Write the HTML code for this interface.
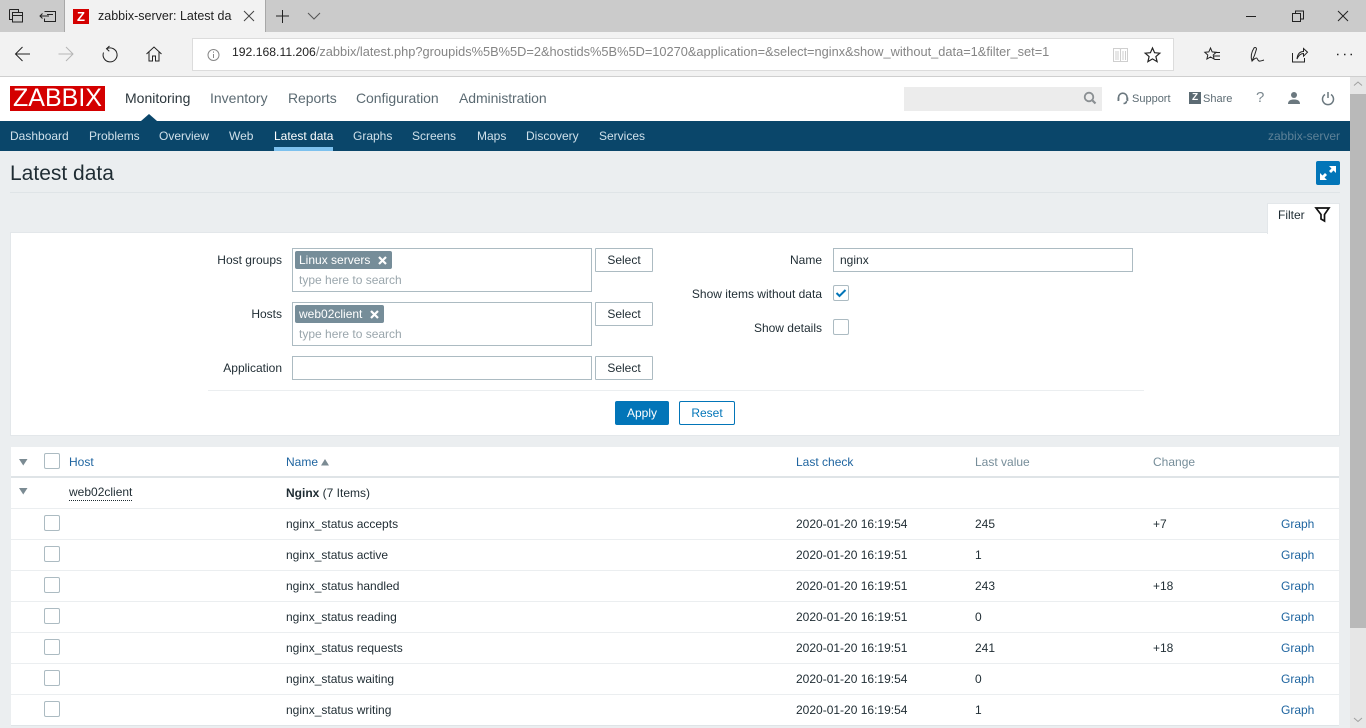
<!DOCTYPE html>
<html><head><meta charset="utf-8"><title>zabbix-server: Latest data</title>
<style>
html,body{margin:0;padding:0;width:1366px;height:728px;overflow:hidden;background:#ebeef0;font-family:"Liberation Sans",sans-serif;font-size:12px;color:#1f2c33}
.a,.t{position:absolute}
.t{white-space:nowrap;line-height:16px}
.r{text-align:right}
.b{background:#fff;border:1px solid #acbbc2;box-sizing:border-box;position:absolute}
.sel{position:absolute;left:595px;width:58px;height:24px;box-sizing:border-box;background:#fff;border:1px solid #acbbc2;text-align:center;line-height:22px;border-radius:1px}
.tag{position:absolute;left:295px;height:18px;background:#768d99;color:#fff;line-height:18px;padding-left:4px;border-radius:2px;box-sizing:border-box}
.ph{position:absolute;left:299px;color:#9aa6ac;line-height:16px}
.cb{position:absolute;width:16px;height:16px;box-sizing:border-box;background:#fff;border:1px solid #acbbc2;border-radius:2px}
.l{color:#1f65a0}
.mn{position:absolute;top:90px;font-size:14px;line-height:16px;color:#5c6b73}
.sn{position:absolute;top:128px;line-height:16px;color:#cfe0ea}
.hl{position:absolute;left:11px;width:1328px;height:1px;background:#ebeef0}
svg{position:absolute;overflow:visible}
</style></head><body>

<!-- browser chrome -->
<div class="a" style="left:0;top:0;width:1366px;height:32px;background:#cbcbcb"></div>
<div class="a" style="left:0;top:32px;width:1366px;height:44px;background:#f2f2f2"></div>
<div class="a" style="left:0;top:76px;width:1366px;height:1px;background:#cfcfcf"></div>
<div class="a" style="left:64px;top:0;width:202px;height:32px;background:#f2f2f2;border-left:1px solid #a8a8a8;border-right:1px solid #a8a8a8;box-sizing:border-box"></div>
<svg style="left:0;top:0" width="340" height="32" fill="none" stroke="#222" stroke-width="1">
<path d="M9.500 9.500h9v3M9.500 9.500v10h3M12.500 12.500h10v9.500h-10zM12.500 15.500h10"/>
<path d="M44.500 11.500h11v10h-11v-3M49 16h-9M42.500 13.500l-2.500 2.500 2.500 2.500M47 14.500h6"/>
<path d="M244 11l10 10M254 11l-10 10" stroke="#444"/>
<path d="M276 16h13M282.500 10v13" stroke="#222"/>
<path d="M308 13l6 6 6-6" stroke="#555"/>
</svg>
<div class="a" style="left:73px;top:9px;width:16px;height:15px;background:#d40000;color:#fff;font:bold 13px/15px 'Liberation Sans',sans-serif;text-align:center">Z</div>
<div class="t" style="left:98px;top:8px;font-size:12.500px;color:#222;width:138px;overflow:hidden">zabbix-server: Latest da</div>

<svg style="left:0;top:32px" width="180" height="44" fill="none" stroke="#222" stroke-width="1">
<path d="M30 22H15.500M22.500 15l-7 7 7 7"/>
<path d="M73 22H58.500M66 15l7 7-7 7" stroke="#b5b5b5"/>
<path d="M107 16.600A7 7 0 1 1 103.500 20.500M109.500 14l-3 2.800 2.800 2.500"/>
<path d="M146.500 22l7.500-7 7.500 7M149 20v9h3.500v-5h3v5h3.500v-9"/>
</svg>
<div class="a" style="left:192px;top:38px;width:982px;height:33px;background:#fff;border:1px solid #dcdcdc;box-sizing:border-box"></div>
<svg style="left:207px;top:48px" width="14" height="14" fill="none" stroke="#888"><circle cx="6.500" cy="7" r="5.500"/><path d="M6.500 6v4M6.500 3.500v1.200"/></svg>
<div class="t" style="left:232px;top:44px;font-size:12.800px;color:#858585"><span style="color:#222;font-size:12.200px">192.168.11.206</span>/zabbix/latest.php?groupids%5B%5D=2&amp;hostids%5B%5D=10270&amp;application=&amp;select=nginx&amp;show_without_data=1&amp;filter_set=1</div>
<svg style="left:1100px;top:40px" width="266" height="30" fill="none" stroke="#222" stroke-width="1">
<path d="M13.500 8.500h6.500l.5 1 .5-1h6.500v13h-14zM20.500 9.500v12M16 11v9M18 11v9M23 11v9M25.500 11v9" stroke="#cfcfcf"/>
<path d="M52.500 8l2.100 4.700 5.200.5-3.900 3.400 1.200 5-4.600-2.700-4.600 2.700 1.200-5-3.900-3.400 5.200-.5z" stroke-width="1.200"/>
<path d="M110.500 8l1.700 3.900 4 .4-3 2.700 .9 4-3.600-2.100-3.600 2.100 .9-4-3-2.700 4-.4zM114 12.500h6M114 16h6M114 19.500h6"/>
<path d="M152 21c-1.500-4 -.5-9 2-13 1-1 2.500-.5 2.500 1-1 4-2.500 8-4.500 12zM152 21c1.500-1.500 3-3 4.500-3 1 0 1 2.500 2.500 3 1.500.5 3-.5 5-1"/>
<path d="M192.500 13v9h12v-4M197 19c.5-5 3-7.500 6.500-7.500V8.500l4 3.700-4 4v-2.700c-3 0-5 2-6.500 5.500z"/>
<path d="M237 14.500h1.500M244 14.500h1.500M250.500 14.500h1.500" stroke-width="1.500"/>
</svg>
<svg style="left:1230px;top:0" width="136" height="32" fill="none" stroke="#222" stroke-width="1">
<path d="M16 16.500h10" />
<path d="M62.500 13.500h8v8h-8zM65.500 13.500v-2.500h8v8h-3"/>
<path d="M108 11l10 10M118 11l-10 10"/>
</svg>

<!-- zabbix header -->
<div class="a" style="left:0;top:77px;width:1350px;height:44px;background:#fff"></div>
<div class="a" style="left:10px;top:86px;width:95px;height:25px;background:#d40000;color:#fff;font-size:25px;line-height:25px;text-align:center;overflow:hidden">ZABBIX</div>
<div class="mn" style="left:125px;color:#2b363c">Monitoring</div>
<div class="mn" style="left:210px">Inventory</div>
<div class="mn" style="left:288px;letter-spacing:-.05px">Reports</div>
<div class="mn" style="left:356px;letter-spacing:-.05px">Configuration</div>
<div class="mn" style="left:459px;letter-spacing:-.08px">Administration</div>
<div class="a" style="left:904px;top:87px;width:198px;height:24px;background:#ececec"></div>
<svg style="left:1083px;top:91px" width="16" height="16" fill="none" stroke="#8a8f92" stroke-width="1.800"><circle cx="6" cy="6" r="4.300"/><path d="M9.500 9.500l3 3" stroke-width="2.200"/></svg>
<svg style="left:1117px;top:92px" width="12" height="13" fill="none" stroke="#6b787f" stroke-width="1.600"><path d="M1.500 8V5.500a4.300 4.300 0 0 1 8.600 0V8M9.500 9c0 1.500-1 2.500-3 2.500"/><rect x=".5" y="5.500" width="1.800" height="3.500" fill="#6b787f" stroke="none"/><rect x="9.500" y="5.500" width="1.800" height="3.500" fill="#6b787f" stroke="none"/></svg>
<div class="t" style="left:1132px;top:91px;font-size:11px;color:#5c6b73">Support</div>
<div class="a" style="left:1189px;top:92px;width:12px;height:12px;background:#5c6b73;color:#fff;font:bold 10px/12px 'Liberation Sans',sans-serif;text-align:center">Z</div>
<div class="t" style="left:1203px;top:91px;font-size:11px;color:#5c6b73">Share</div>
<div class="t" style="left:1256px;top:90px;font-size:15px;color:#7b888f">?</div>
<svg style="left:1287px;top:91px" width="14" height="14" fill="#6b787f"><circle cx="7" cy="4" r="3"/><path d="M1 13c0-3.500 2.500-4.500 6-4.500s6 1 6 4.500z"/></svg>
<svg style="left:1321px;top:91px" width="14" height="14" fill="none" stroke="#6b787f" stroke-width="1.500"><path d="M4 3.500a5.500 5.500 0 1 0 6 0M7 1v6"/></svg>

<!-- sub nav -->
<div class="a" style="left:0;top:121px;width:1350px;height:30px;background:#0a466a"></div>
<div class="a" style="left:141px;top:114px;width:0;height:0;border-left:8px solid transparent;border-right:8px solid transparent;border-bottom:7px solid #0a466a"></div>
<div class="sn" style="left:10px">Dashboard</div>
<div class="sn" style="left:89px">Problems</div>
<div class="sn" style="left:159px">Overview</div>
<div class="sn" style="left:229px">Web</div>
<div class="sn" style="left:274px;color:#fff">Latest data</div>
<div class="a" style="left:274px;top:147px;width:59px;height:4px;background:#7dc1ee"></div>
<div class="sn" style="left:353px">Graphs</div>
<div class="sn" style="left:412px">Screens</div>
<div class="sn" style="left:477px">Maps</div>
<div class="sn" style="left:526px">Discovery</div>
<div class="sn" style="left:599px">Services</div>
<div class="sn" style="left:1268px;color:#5d8197">zabbix-server</div>

<!-- title -->
<div class="t" style="left:10px;top:162px;font-size:21px;line-height:24px;color:#1f2c33">Latest data</div>
<div class="a" style="left:10px;top:192px;width:1330px;height:1px;background:#dfe4e7"></div>
<div class="a" style="left:1316px;top:161px;width:24px;height:24px;background:#0275b8;border-radius:2px"></div>
<svg style="left:1316px;top:161px" width="24" height="24" fill="#fff"><path d="M13 5h7v7l-2.500-2.500-2.500 2.500-2-2 2.500-2.500zM11 19H4v-7l2.500 2.500L9 12l2 2-2.500 2.500z"/></svg>

<!-- filter -->
<div class="a" style="left:10px;top:232px;width:1330px;height:204px;background:#fff;border:1px solid #e3e7ea;box-sizing:border-box"></div>
<div class="a" style="left:1267px;top:203px;width:73px;height:31px;background:#fff;border:1px solid #e3e7ea;border-bottom:0;box-sizing:border-box"></div>
<div class="t" style="left:1278px;top:207px;color:#1f2c33">Filter</div>
<svg style="left:1315px;top:207px" width="15" height="15" fill="none" stroke="#111" stroke-width="1.700"><path d="M1 1h13L9.500 7.500v6.500L6 12V7.500z"/></svg>

<div class="t r" style="left:182px;width:100px;top:252px">Host groups</div>
<div class="b" style="left:292px;top:248px;width:300px;height:44px"></div>
<div class="tag" style="top:251px;width:97px">Linux servers</div>
<svg style="left:378px;top:256px" width="9" height="9" stroke="#fff" stroke-width="2.200"><path d="M1 1l7 7M8 1L1 8"/></svg>
<div class="ph" style="top:272px">type here to search</div>
<div class="sel" style="top:248px">Select</div>

<div class="t r" style="left:182px;width:100px;top:306px">Hosts</div>
<div class="b" style="left:292px;top:302px;width:300px;height:44px"></div>
<div class="tag" style="top:305px;width:89px">web02client</div>
<svg style="left:370px;top:310px" width="9" height="9" stroke="#fff" stroke-width="2.200"><path d="M1 1l7 7M8 1L1 8"/></svg>
<div class="ph" style="top:326px">type here to search</div>
<div class="sel" style="top:302px">Select</div>

<div class="t r" style="left:182px;width:100px;top:360px">Application</div>
<div class="b" style="left:292px;top:356px;width:300px;height:24px"></div>
<div class="sel" style="top:356px">Select</div>

<div class="t r" style="left:622px;width:200px;top:252px">Name</div>
<div class="b" style="left:833px;top:248px;width:300px;height:24px"></div>
<div class="t" style="left:840px;top:252px">nginx</div>
<div class="t r" style="left:622px;width:200px;top:286px">Show items without data</div>
<div class="cb" style="left:833px;top:285px"></div>
<svg style="left:833px;top:285px" width="16" height="16" fill="none" stroke="#0275b8" stroke-width="2"><path d="M3.500 8l3 3 6-6"/></svg>
<div class="t r" style="left:622px;width:200px;top:320px">Show details</div>
<div class="cb" style="left:833px;top:319px"></div>

<div class="a" style="left:208px;top:390px;width:936px;height:1px;background:#ebeef0"></div>
<div class="a" style="left:615px;top:401px;width:54px;height:24px;background:#0275b8;color:#fff;border-radius:2px;text-align:center;line-height:24px">Apply</div>
<div class="a" style="left:679px;top:401px;width:56px;height:24px;box-sizing:border-box;background:#fff;border:1px solid #0275b8;color:#0275b8;border-radius:2px;text-align:center;line-height:22px">Reset</div>

<!-- table -->
<div class="a" style="left:11px;top:447px;width:1328px;height:279px;background:#fff"></div>
<div class="a" style="left:11px;top:476px;width:1328px;height:2px;background:#dfe4e7"></div>
<div class="hl" style="top:508px"></div><div class="hl" style="top:539px"></div><div class="hl" style="top:570px"></div><div class="hl" style="top:601px"></div><div class="hl" style="top:632px"></div><div class="hl" style="top:663px"></div><div class="hl" style="top:694px"></div><div class="hl" style="top:725px;background:#dfe4e7"></div>

<svg style="left:19px;top:459px" width="9" height="40" fill="#7b8b93"><path d="M0 0h8.500L4.250 6.500zM0 29h8.500L4.250 35.500z"/></svg>
<div class="cb" style="left:44px;top:453px"></div>
<div class="t l" style="left:69px;top:454px">Host</div>
<div class="t l" style="left:286px;top:454px">Name</div>
<svg style="left:321px;top:459px" width="8" height="7" fill="#7b8b93"><path d="M0 6.500L4 0l4 6.500z"/></svg>
<div class="t l" style="left:796px;top:454px">Last check</div>
<div class="t" style="left:975px;top:454px;color:#768d99">Last value</div>
<div class="t" style="left:1153px;top:454px;color:#768d99">Change</div>

<div class="t" style="left:69px;top:485px;border-bottom:1px dotted #1f2c33;line-height:15px">web02client</div>
<div class="t" style="left:286px;top:485px"><b>Nginx</b> (7 Items)</div>

<div class="cb" style="left:44px;top:515px"></div><div class="t" style="left:286px;top:516px">nginx_status accepts</div><div class="t" style="left:796px;top:516px">2020-01-20 16:19:54</div><div class="t" style="left:975px;top:516px">245</div><div class="t" style="left:1153px;top:516px">+7</div><div class="t l" style="left:1281px;top:516px">Graph</div>
<div class="cb" style="left:44px;top:546px"></div><div class="t" style="left:286px;top:547px">nginx_status active</div><div class="t" style="left:796px;top:547px">2020-01-20 16:19:51</div><div class="t" style="left:975px;top:547px">1</div><div class="t l" style="left:1281px;top:547px">Graph</div>
<div class="cb" style="left:44px;top:577px"></div><div class="t" style="left:286px;top:578px">nginx_status handled</div><div class="t" style="left:796px;top:578px">2020-01-20 16:19:51</div><div class="t" style="left:975px;top:578px">243</div><div class="t" style="left:1153px;top:578px">+18</div><div class="t l" style="left:1281px;top:578px">Graph</div>
<div class="cb" style="left:44px;top:608px"></div><div class="t" style="left:286px;top:609px">nginx_status reading</div><div class="t" style="left:796px;top:609px">2020-01-20 16:19:51</div><div class="t" style="left:975px;top:609px">0</div><div class="t l" style="left:1281px;top:609px">Graph</div>
<div class="cb" style="left:44px;top:639px"></div><div class="t" style="left:286px;top:640px">nginx_status requests</div><div class="t" style="left:796px;top:640px">2020-01-20 16:19:51</div><div class="t" style="left:975px;top:640px">241</div><div class="t" style="left:1153px;top:640px">+18</div><div class="t l" style="left:1281px;top:640px">Graph</div>
<div class="cb" style="left:44px;top:670px"></div><div class="t" style="left:286px;top:671px">nginx_status waiting</div><div class="t" style="left:796px;top:671px">2020-01-20 16:19:54</div><div class="t" style="left:975px;top:671px">0</div><div class="t l" style="left:1281px;top:671px">Graph</div>
<div class="cb" style="left:44px;top:701px"></div><div class="t" style="left:286px;top:702px">nginx_status writing</div><div class="t" style="left:796px;top:702px">2020-01-20 16:19:54</div><div class="t" style="left:975px;top:702px">1</div><div class="t l" style="left:1281px;top:702px">Graph</div>

<!-- scrollbar -->
<div class="a" style="left:1350px;top:77px;width:16px;height:651px;background:#e6e6e6"></div>
<div class="a" style="left:1350px;top:94px;width:16px;height:534px;background:#b9b9b9"></div>
<svg style="left:1350px;top:77px" width="16" height="651" fill="none" stroke="#a0a0a0"><path d="M4 8.500l4-3.500 4 3.500M4 641l4 3.500 4-3.500"/></svg>
</body></html>
